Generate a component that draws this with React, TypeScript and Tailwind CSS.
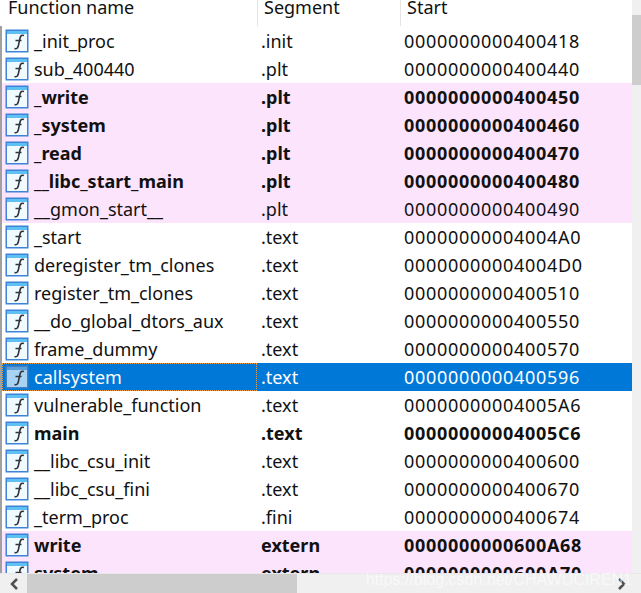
const rows: [string, string, string, number][] = [
  ["_init_proc", ".init", "0000000000400418", 0],
  ["sub_400440", ".plt", "0000000000400440", 0],
  ["_write", ".plt", "0000000000400450", 2],
  ["_system", ".plt", "0000000000400460", 2],
  ["_read", ".plt", "0000000000400470", 2],
  ["__libc_start_main", ".plt", "0000000000400480", 2],
  ["__gmon_start__", ".plt", "0000000000400490", 1],
  ["_start", ".text", "00000000004004A0", 0],
  ["deregister_tm_clones", ".text", "00000000004004D0", 0],
  ["register_tm_clones", ".text", "0000000000400510", 0],
  ["__do_global_dtors_aux", ".text", "0000000000400550", 0],
  ["frame_dummy", ".text", "0000000000400570", 0],
  ["callsystem", ".text", "0000000000400596", 3],
  ["vulnerable_function", ".text", "00000000004005A6", 0],
  ["main", ".text", "00000000004005C6", 4],
  ["__libc_csu_init", ".text", "0000000000400600", 0],
  ["__libc_csu_fini", ".text", "0000000000400670", 0],
  ["_term_proc", ".fini", "0000000000400674", 0],
  ["write", "extern", "0000000000600A68", 2],
  ["system", "extern", "0000000000600A70", 2],
];

function FuncIcon({ selected }: { selected: boolean }) {
  return (
    <svg width="24" height="24" viewBox="0 0 24 24" className="shrink-0">
      <rect x="0.5" y="0.5" width="23" height="23" fill={selected ? "#3f7fc4" : "#3f83d8"} />
      <rect x="2" y="2" width="20" height="20" fill={selected ? "#a9d3f2" : "#f1fbff"} />
      <rect x="2" y="2" width="20" height="3" fill={selected ? "#5f9fd8" : "#5fc0f4"} />
      <path d="M19 6.500c-2-.8-3.400 0-3.900 2.200l-1.900 8.600c-.5 2-1.800 2.800-3.700 2.200M10.500 11.500h6" fill="none" stroke="#30343c" strokeWidth="1.600" />
    </svg>
  );
}

export default function App() {
  return (
    <div className="relative h-[593px] w-[641px] overflow-hidden bg-white font-['Noto_Sans','Open_Sans',sans-serif] text-[18px] text-[#111]">
      <div className="flex h-[26px] items-start pl-[2px] leading-[15px]">
        <div className="h-[26px] w-[256px] border-r border-[#e5e5e5] pl-[6px]">Function name</div>
        <div className="h-[26px] w-[143px] border-r border-[#e5e5e5] pl-[6px]">Segment</div>
        <div className="pl-[6px]">Start</div>
      </div>
      <div className="flex h-[547px] border-l-2 border-[#a0a0a0]">
        <div className="w-[630px] overflow-hidden pt-px">
          {rows.map(([name, seg, start, kind]) => (
            <div
              key={start}
              className={
                kind === 3
                  ? "flex h-[28px] items-center bg-[#0078d7] text-white"
                  : kind === 4
                    ? "flex h-[28px] items-center font-bold"
                    : kind === 2
                      ? "flex h-[28px] items-center bg-[#fde4fd] font-bold"
                      : kind === 1
                        ? "flex h-[28px] items-center bg-[#fde4fd]"
                        : "flex h-[28px] items-center"
              }
            >
              <div
                className={
                  kind === 3
                    ? "flex h-[28px] w-[255px] items-center gap-[5px] border border-dotted border-[#f0a040] pl-[2px]"
                    : "flex h-[28px] w-[255px] items-center gap-[5px] pl-[3px]"
                }
              >
                <FuncIcon selected={kind === 3} />
                <span className="whitespace-nowrap">{name}</span>
              </div>
              <div className="w-[145px] pl-[4px]">{seg}</div>
              <div className="pl-[2px] tracking-[0.7px]">{start}</div>
            </div>
          ))}
        </div>
      </div>
      <div className="absolute top-0 right-0 flex h-[573px] w-[9px] flex-col bg-[#f0f0f0]">
        <div className="h-[15px]" />
        <div className="h-[70px] bg-[#cdcdcd]" />
      </div>
      <div className="absolute bottom-0 left-0 flex h-[20px] w-[641px] items-center border-t border-[#e8e8e8] bg-[#f0f0f0]">
        <div className="flex w-[27px] justify-center">
          <svg width="10" height="14" viewBox="0 0 10 14"><path d="M8 2 3 7l5 5" fill="none" stroke="#505050" strokeWidth="2.500" /></svg>
        </div>
        <div className="h-[20px] w-[270px] bg-[#cdcdcd]" />
        <div className="flex flex-1 justify-end pr-[14px]">
          <svg width="10" height="14" viewBox="0 0 10 14"><path d="M2 2l5 5-5 5" fill="none" stroke="#505050" strokeWidth="2.500" /></svg>
        </div>
      </div>
      <div className="absolute right-[9px] bottom-[3px] font-['Liberation_Sans',sans-serif] text-[16px] leading-[20px] text-white/60">https://blog.csdn.net/CHAWUCIREN1</div>
    </div>
  );
}
